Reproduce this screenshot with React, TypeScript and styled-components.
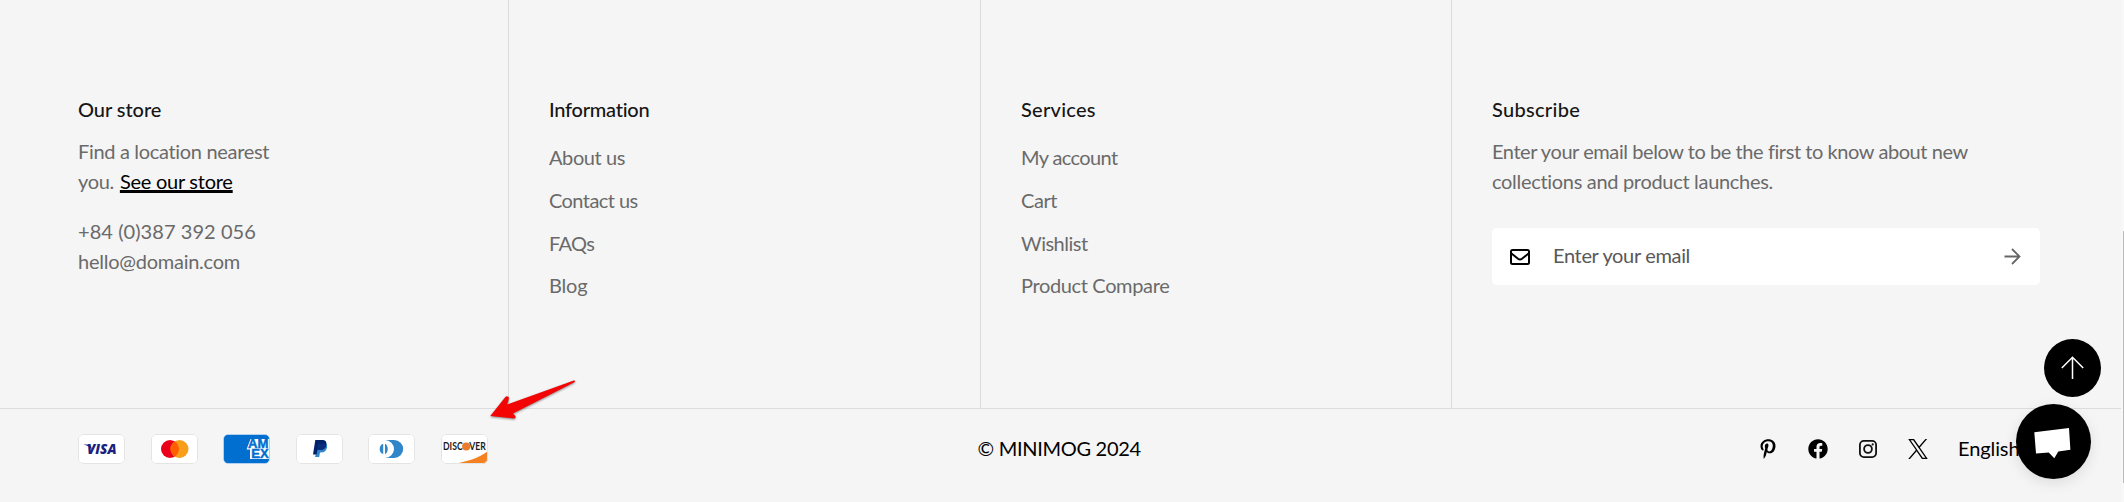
import React from "react";
import styled, { createGlobalStyle } from "styled-components";
import { FaFacebook, FaPinterestP } from "react-icons/fa";

const GlobalStyle = createGlobalStyle`
  * { box-sizing: border-box; }
  body { margin: 0; background: #f5f5f5; overflow: hidden; }
`;

const Page = styled.div`
  position: relative;
  display: flex;
  width: 100%;
  height: 502px;
  background: #f5f5f5;
  color: #000;
  font-family: Lato, "Open Sans", sans-serif;
  font-size: 20px;
  line-height: 30px;
`;

const Footer = styled.footer`
  flex: 1;
  display: flex;
  flex-direction: column;
`;

const Columns = styled.div`
  display: grid;
  grid-template-columns: 509px 472px 471px 1fr;
  height: 409px;
  border-bottom: 1px solid #dcdcdc;
`;

const Column = styled.section<{ $first?: boolean }>`
  padding: 94px 40px 0 ${(p) => (p.$first ? 78 : 40)}px;
  border-right: 1px solid #dcdcdc;
  &:last-child { border-right: 0; padding-right: 81px; }
`;

const Track = styled.span<{ $ls: number }>`
  letter-spacing: ${(p) => p.$ls}px;
  white-space: nowrap;
`;

const Heading = styled.h3`
  margin: 0 0 12px;
  font-size: 20px;
  font-weight: 500;
  color: #161616;
`;

const Paragraph = styled.p`
  margin: 0 0 20px;
  color: #6a6a6a;
`;

const StoreLink = styled.a`
  margin-left: 1px;
  color: #000;
  text-decoration: underline;
  text-decoration-thickness: 3px;
  text-underline-offset: 1px;
  text-decoration-skip-ink: none;
`;

const Links = styled.ul`
  list-style: none;
  margin: 0;
  padding: 6.4px 0 0;
  display: flex;
  flex-direction: column;
  gap: 12.6px;
  color: #6a6a6a;
`;

const Field = styled.div`
  display: flex;
  align-items: center;
  height: 57px;
  margin-top: 32px;
  padding: 0 19px 0 18px;
  border-radius: 5px;
  background: #fff;
  color: #585858;
`;

const Placeholder = styled.span`
  flex: 1;
  margin-left: 23px;
  padding-bottom: 3px;
`;

const Bottom = styled.div`
  display: grid;
  grid-template-columns: 1fr auto 1fr;
  align-items: center;
  height: 80px;
  padding: 0 78px;
`;

const Cards = styled.div`
  display: flex;
  gap: 25.6px;
`;

const Card = styled.svg`
  display: block;
  width: 47px;
  height: 30px;
  background: #fff;
  border-radius: 5px;
`;

const Copyright = styled.div`
  width: 164px;
  margin-left: -2px;
  padding-bottom: 3px;
`;

const Right = styled.div`
  display: flex;
  align-items: center;
  justify-content: flex-end;
`;

const Socials = styled.div`
  display: grid;
  grid-template-columns: repeat(4, 20px);
  gap: 30px;
  margin-right: 30px;
  svg { display: block; justify-self: center; }
`;

const Language = styled.div`
  width: 85px;
  padding-bottom: 3px;
`;

const ScrollRail = styled.div`
  width: 3px;
  padding: 231px 0 19px 2px;
  background: #f8f8f8;
`;

const ScrollThumb = styled.div`
  height: 252px;
  background: #bababa;
`;

const TopButton = styled.button`
  position: absolute;
  left: 2044px;
  top: 339px;
  width: 57px;
  height: 58px;
  padding: 0;
  border: 0;
  border-radius: 50%;
  background: #000;
  svg { display: block; }
`;

const ChatButton = styled(TopButton)`
  left: 2016px;
  top: 404px;
  width: 75px;
  height: 75px;
  box-shadow: 0 4px 14px rgba(0, 0, 0, 0.1);
`;

const Pointer = styled.svg`
  position: absolute;
  left: 480px;
  top: 375px;
  filter: drop-shadow(0 1px 1px rgba(0, 0, 0, 0.45));
`;

const info: [string, number][] = [["About us", -0.4], ["Contact us", -0.57], ["FAQs", -0.6], ["Blog", -0.2]];
const services: [string, number][] = [["My account", -0.62], ["Cart", -0.45], ["Wishlist", -0.5], ["Product Compare", -0.36]];

const LinkList = ({ items }: { items: [string, number][] }) => (
  <Links>
    {items.map(([label, ls]) => (
      <li key={label}><Track $ls={ls}>{label}</Track></li>
    ))}
  </Links>
);

const Outline = () => <rect x="0.5" y="0.5" width="46" height="29" rx="4.5" fill="none" stroke="#e4e4e4" />;

const PaymentCards = () => (
  <Cards>
    <Card viewBox="0 0 47 30" aria-label="Visa">
      <text x="9" y="20.3" fontFamily="Open Sans" fontWeight="800" fontStyle="italic" fontSize="13.5" fill="#1a1f80" textLength="29.5" lengthAdjust="spacingAndGlyphs">VISA</text>
      <path d="M6 10.5h5l2 1.6 1 4.2c-1.5-3-4-4.8-8-5.5z" fill="#1a1f80" />
      <Outline />
    </Card>
    <Card viewBox="0 0 47 30" aria-label="Mastercard">
      <circle cx="19" cy="15" r="9" fill="#eb001b" />
      <circle cx="28.5" cy="15" r="9" fill="#f79e1b" />
      <path d="M23.75 7.36a9 9 0 0 1 0 15.28a9 9 0 0 1 0-15.28z" fill="#ff5f00" />
      <Outline />
    </Card>
    <Card viewBox="0 0 47 30" aria-label="American Express">
      <rect x="0.5" y="0.5" width="46" height="29" rx="4.5" fill="#006fcf" />
      <path d="M27.5 5H46v20H27V15.5h-3.5z" fill="#fff" />
      <g fontFamily="Liberation Sans" fontWeight="700" fontSize="12" fill="#006fcf" stroke="#006fcf" strokeWidth="0.4">
        <text x="25" y="14.4" textLength="20.5" lengthAdjust="spacingAndGlyphs">AM</text>
        <text x="28.2" y="24.2" textLength="17.5" lengthAdjust="spacingAndGlyphs">EX</text>
      </g>
      <rect x="0.5" y="0.5" width="46" height="29" rx="4.5" fill="none" stroke="#c7dbef" strokeOpacity="0.7" />
    </Card>
    <Card viewBox="0 0 47 30" aria-label="PayPal">
      <path d="M23 9.5h6.5c1.600 1 1.900 2.600 1.400 4.600-.8 3.300-2.900 4.500-6 4.500h-.9l-.8 4.400h-4.200z" fill="#3086c8" />
      <path d="M19.3 6h6.700c3.400 0 5 1.700 4.400 4.700-.7 3.700-3 5.300-6.600 5.300h-2.300l-.9 4.400H17z" fill="#012169" />
      <path d="M22 9.5h5.800c1 0 1.800.4 2.400 1.200-.7 3.700-3 5.300-6.400 5.300h-2.900z" fill="#0a2a7c" />
      <Outline />
    </Card>
    <Card viewBox="0 0 47 30" aria-label="Diners Club">
      <path d="M17 6h9.200a9 9 0 0 1 0 18H17a9 9 0 0 0 0-18z" fill="#3086c8" />
      <circle cx="17" cy="15" r="7.9" fill="#fff" />
      <path d="M15.2 9.800a5.600 5.600 0 0 0 0 10.400zM17 9.800c3.700 1.400 3.700 9 0 10.400z" fill="#3086c8" />
      <Outline />
    </Card>
    <Card viewBox="0 0 47 30" aria-label="Discover">
      <path d="M12 30C25 28 38 24 47 17v8a5 5 0 0 1-5 5z" fill="#f58220" />
      <g fontFamily="Lato" fontWeight="700" fontSize="10.8" fill="#1b1b1b">
        <text x="2" y="16.4" textLength="19.6" lengthAdjust="spacingAndGlyphs">DISC</text>
        <text x="28.3" y="16.4" textLength="16.5" lengthAdjust="spacingAndGlyphs">VER</text>
      </g>
      <circle cx="25.2" cy="12.5" r="4.1" fill="#ea7a2c" />
      <Outline />
    </Card>
  </Cards>
);

export default function App() {
  return (
    <Page>
      <GlobalStyle />
      <Footer>
        <Columns>
          <Column $first>
            <Heading><Track $ls={-0.05}>Our store</Track></Heading>
            <Paragraph>
              <Track $ls={-0.32}>Find a location nearest</Track>
              <br />
              <Track $ls={-0.3}>you. </Track>
              <StoreLink><Track $ls={-0.25}>See our store</Track></StoreLink>
            </Paragraph>
            <Paragraph>
              <Track $ls={0.06}>+84 (0)387 392 056</Track>
              <br />
              <Track $ls={-0.25}>hello@domain.com</Track>
            </Paragraph>
          </Column>
          <Column>
            <Heading><Track $ls={-0.25}>Information</Track></Heading>
            <LinkList items={info} />
          </Column>
          <Column>
            <Heading><Track $ls={0.25}>Services</Track></Heading>
            <LinkList items={services} />
          </Column>
          <Column>
            <Heading><Track $ls={0.3}>Subscribe</Track></Heading>
            <Paragraph>
              <Track $ls={-0.43}>Enter your email below to be the first to know about new</Track>
              <br />
              <Track $ls={-0.31}>collections and product launches.</Track>
            </Paragraph>
            <Field>
              <svg width="20" height="16" viewBox="0 0 20 16" fill="none" stroke="#000" strokeWidth="2">
                <rect x="1" y="1" width="18" height="14" rx="1.5" />
                <path d="M1.5 4.5 8 9.8q2 1.4 4 0l6.5-5.3" />
              </svg>
              <Placeholder><Track $ls={-0.34}>Enter your email</Track></Placeholder>
              <svg width="17" height="17" viewBox="0 0 17 17" fill="none" stroke="#666" strokeWidth="1.8">
                <path d="M0.5 8.5H15.5M8 1l7.5 7.5L8 16" />
              </svg>
            </Field>
          </Column>
        </Columns>
        <Bottom>
          <PaymentCards />
          <Copyright><Track $ls={-0.3}>© MINIMOG 2024</Track></Copyright>
          <Right>
            <Socials>
              <FaPinterestP size={20} />
              <FaFacebook size={20} />
              <svg width="18" height="20" viewBox="0 0 18 20" fill="none" stroke="#111" strokeWidth="1.8">
                <rect x="0.9" y="1.9" width="16.2" height="16.2" rx="4" />
                <circle cx="9" cy="10" r="3.9" />
                <circle cx="13.7" cy="5.4" r="1.1" fill="#111" stroke="none" />
              </svg>
              <svg width="20" height="20" viewBox="0 0 1200 1227" fill="#000">
                <path d="M714.163 519.284L1160.89 0H1055.03L667.137 450.887L357.328 0H0L468.492 681.821L0 1226.37H105.866L515.491 750.218L842.672 1226.37H1200L714.137 519.284H714.163ZM569.165 687.828L521.697 619.934L144.011 79.6944H306.615L611.412 515.685L658.88 583.579L1055.08 1150.3H892.476L569.165 687.854V687.828Z" />
              </svg>
            </Socials>
            <Language><Track $ls={-0.1}>English</Track></Language>
          </Right>
        </Bottom>
      </Footer>
      <ScrollRail><ScrollThumb /></ScrollRail>
      <TopButton aria-label="Back to top">
        <svg width="57" height="58" fill="none" stroke="#fff" strokeWidth="1.5">
          <path d="M28.5 40V18.5M17.8 29 28.5 18.3 39.2 29" />
        </svg>
      </TopButton>
      <ChatButton aria-label="Open chat">
        <svg width="75" height="75" fill="#fff">
          <path d="M18.3 28.3 53 24l1.4 21.7-12.1 1.9-4 6.6-5.600-5.800-12.700 1z" />
        </svg>
      </ChatButton>
      <Pointer width="100" height="50">
        <path d="M10.3 41 25.4 21.9q1.8-1.4 3.3.4.5 1-1.5 7.200L94.5 5.300l.4 1.600L33 38.500l2 2q1.400 1.800-.6 3.100z" fill="#f40505" />
      </Pointer>
    </Page>
  );
}
